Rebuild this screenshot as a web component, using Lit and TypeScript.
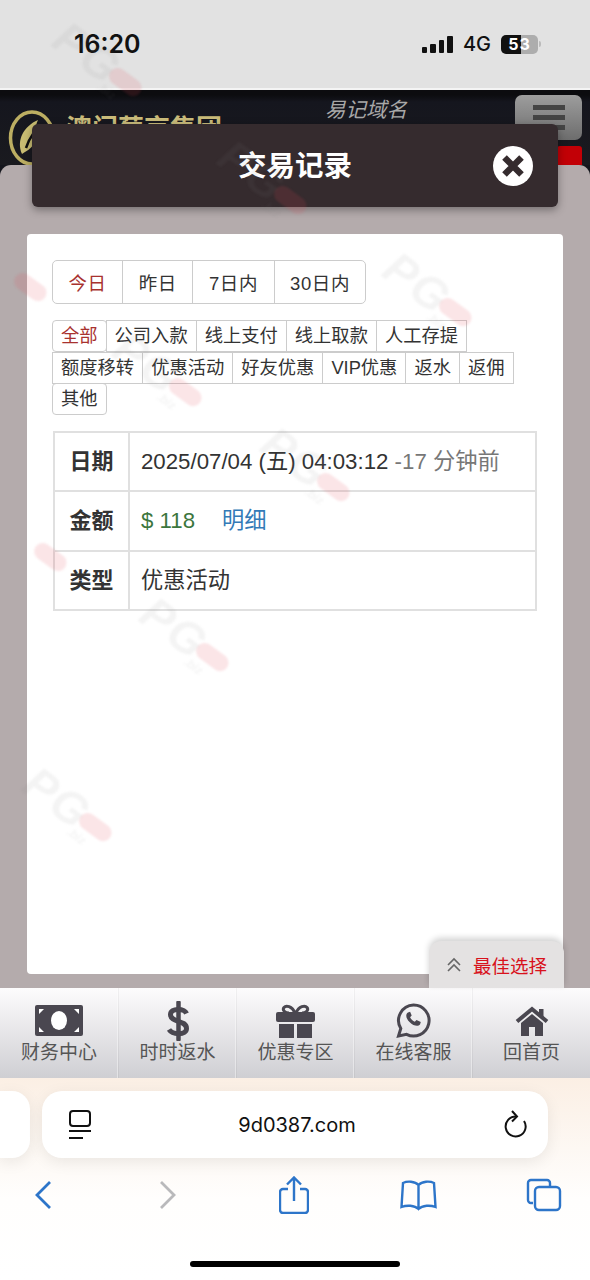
import { LitElement, html, css, svg } from "lit";
import { customElement } from "lit/decorators.js";

const ranges = ["今日", "昨日", "7日内", "30日内"];
const filters = ["全部", "公司入款", "线上支付", "线上取款", "人工存提", "额度移转", "优惠活动", "好友优惠", "VIP优惠", "返水", "返佣", "其他"];
const marks: [number, number, boolean][] = [[50, 20, true], [215, 138, true], [380, 250, true], [-45, 225, false], [110, 330, true], [258, 425, true], [-25, 495, false], [137, 595, true], [20, 765, true]];

const icons = {
  logo: svg`<svg width="48" height="56" viewBox="0 0 48 56" fill="none"><ellipse cx="24" cy="28" rx="21.500" ry="26" stroke="#bcae62" stroke-width="3.500"/><path d="M14 44C8 30 16 16 30 10c-4 8-1 12-3 20s-7 10-13 14z" fill="#c9bd72"/><path d="M18 38c2-6 4-10 7-14" stroke="#111" stroke-width="2.500"/></svg>`,
  money: svg`<svg width="48" height="31" viewBox="0 0 48 31"><rect width="48" height="31" rx="2" fill="#4a4750"/><ellipse cx="24" cy="15.500" rx="8" ry="9.500" fill="#fff"/><path d="M4 4h5l-5 5zM44 4h-5l5 5zM4 27h5l-5-5zM44 27h-5l5-5z" fill="#fff"/></svg>`,
  dollar: svg`<svg width="24" height="40" viewBox="0 0 24 40" fill="none" stroke="#4a4750"><path d="M20.500 12.500C18.500 7.500 4.500 6.500 4.500 13.500c0 8.500 16 5 16 14 0 7-14 6.500-17.500 1" stroke-width="5"/><path d="M12.500 1.500v37" stroke-width="4.500" stroke-linecap="round"/></svg>`,
  gift: svg`<svg width="39" height="34" viewBox="0 0 39 34" fill="none"><path d="M19 9C16 2 10 1 8 3.500S9 9 13 9M20 9c3-7 9-8 11-5.500S30 9 26 9" stroke="#4a4750" stroke-width="3"/><rect y="8" width="39" height="10" rx="2" fill="#4a4750"/><rect x="3" y="20" width="15" height="14" fill="#4a4750"/><rect x="21" y="20" width="15" height="14" fill="#4a4750"/></svg>`,
  chat: svg`<svg width="35" height="35" viewBox="0 0 35 35"><path d="M17.500 2a15.500 15.500 0 1 1-7 29.300L2.500 33l2.300-7.500A15.500 15.500 0 0 1 17.500 2z" fill="none" stroke="#4a4750" stroke-width="3"/><path d="M12 9.500c-2.500 1.500-2.500 5.500 1.500 9.500s8.500 5 10.500 2.500l.8-2.500-4.300-2-1.700 1.800c-2-.8-3.700-2.600-4.700-4.600l1.600-1.700-1.600-3.800z" fill="#4a4750"/></svg>`,
  home: svg`<svg width="34" height="30" viewBox="0 0 34 30" fill="none"><path d="M2 15.500 17 3l15 12.500" stroke="#4a4750" stroke-width="4"/><path d="M24 3h4.500v8L24 8z" fill="#4a4750"/><path d="M6 17 17 8l11 9v13h-8v-9h-6v9H6z" fill="#4a4750"/></svg>`,
  reader: svg`<svg width="24" height="30" viewBox="0 0 24 30" fill="none" stroke="#111" stroke-width="2"><rect x="2" y="1" width="20" height="15" rx="3"/><path d="M1 21h22M1 28h14"/></svg>`,
  reload: svg`<svg width="26" height="30" viewBox="0 0 26 30" fill="none" stroke="#111" stroke-width="2"><path d="M14 6.500A10 10 0 1 0 22 11"/><path d="M10 1l5 5.500-5 5"/></svg>`,
  back: svg`<svg width="18" height="30" viewBox="0 0 18 30" fill="none" stroke="#2d75c9" stroke-width="2.800"><path d="M16 2 3 15l13 13"/></svg>`,
  forward: svg`<svg width="18" height="30" viewBox="0 0 18 30" fill="none" stroke="#b9b9bb" stroke-width="2.800"><path d="M2 2l13 13L2 28"/></svg>`,
  share: svg`<svg width="30" height="38" viewBox="0 0 30 38" fill="none" stroke="#2d75c9" stroke-width="2.400"><path d="M9 13H4a3 3 0 0 0-3 3v18a3 3 0 0 0 3 3h22a3 3 0 0 0 3-3V16a3 3 0 0 0-3-3h-5"/><path d="M15 25V2M8 8.500 15 1.500l7 7"/></svg>`,
  book: svg`<svg width="37" height="31" viewBox="0 0 37 31" fill="none" stroke="#2d75c9" stroke-width="2.400"><path d="M18.500 5C15 1 7 1 3 3L1.500 27c5-2 13-2 17 2 4-4 12-4 17-2L34 3c-4-2-12-2-15.500 2zM18.500 5v24"/></svg>`,
  tabs: svg`<svg width="36" height="34" viewBox="0 0 36 34" fill="none" stroke="#2d75c9" stroke-width="2.400"><path d="M7 25H5a3 3 0 0 1-3-3V5a3 3 0 0 1 3-3h16a3 3 0 0 1 3 3v3"/><rect x="9" y="9" width="25" height="23" rx="4"/></svg>`,
  up: svg`<svg width="16" height="16" viewBox="0 0 16 16" fill="none" stroke="#666" stroke-width="1.600"><path d="M2 8l6-6 6 6M2 14l6-6 6 6"/></svg>`,
  close: svg`<svg width="24" height="24" viewBox="0 0 24 24" stroke="#352b2e" stroke-width="6.500"><path d="M3.500 3.500l17 17M20.500 3.500l-17 17"/></svg>`,
};

@customElement("app-root")
export class AppRoot extends LitElement {
  static styles = css`
    :host { display: block; position: relative; width: 590px; height: 1280px; overflow: hidden; background: #14151c; font-family: "Liberation Sans", "Noto Sans CJK SC", sans-serif; color: #333; }
    * { box-sizing: border-box; }

    .status { height: 88px; background: #e2e2e2; display: flex; align-items: center; padding: 0 49px 0 74px; color: #111; }
    .time { font: 600 25px "Inter", sans-serif; margin-right: auto; }
    .signal { display: flex; align-items: flex-end; gap: 3px; height: 17px; margin-right: 10px; }
    .signal i { display: block; width: 5.500px; background: #111; border-radius: 1px; }
    .net { font: 500 20px "Inter", sans-serif; margin-right: 10px; }
    .battery { width: 37px; height: 19px; border-radius: 5px; background: linear-gradient(90deg, #111 55%, #adadad 55%); color: #fff; font: 700 16px/19px "Inter", sans-serif; text-align: center; letter-spacing: 1px; }
    .tip { width: 2px; height: 6px; background: #bbb; margin-left: 1px; border-radius: 0 2px 2px 0; }

    .site { height: 77px; border-top: 2px solid #f4f4f4; background: linear-gradient(#0c0c0f 0 5px, #15161e 12px, #1a1a1f); display: flex; padding-left: 8px; overflow: hidden; }
    .logo { width: 48px; height: 56px; margin-top: 20px; flex: none; }
    .name { margin: 24px 0 0 10px; font-size: 26px; line-height: 30px; font-weight: 700; color: #c9bb7a; white-space: nowrap; flex: none; }
    .domain { margin: 7px 0 0 103px; font-size: 20.500px; line-height: 26px; font-style: italic; color: #a8a8a8; white-space: nowrap; flex: none; }
    .side { margin: 5px 8px 0 auto; display: flex; flex-direction: column; align-items: flex-end; gap: 6px; }
    .menu { width: 67px; height: 47px; border-radius: 7px; background: linear-gradient(#9d9d9d, #6d6d6d); display: flex; flex-direction: column; align-items: center; justify-content: center; gap: 5px; }
    .menu i { display: block; width: 32px; height: 5px; background: #444; }
    .red { width: 25px; height: 20px; background: #c20006; border-radius: 3px 3px 0 0; }

    .panel { height: 823px; background: #b4abac; border-radius: 11px 11px 0 0; padding: 69px 27px 14px; }
    .card { height: 740px; background: #fff; border-radius: 4px; padding: 26px 26px 0 25px; }
    .ranges { display: inline-flex; height: 44px; border: 1px solid #ccc; border-radius: 5px; }
    .ranges span { display: flex; align-items: center; padding: 0 15.500px; font-size: 18.500px; border-left: 1px solid #ccc; letter-spacing: .6px; }
    .ranges span:first-child { border-left: 0; }
    .on { color: #a8322f; }
    .chips { display: flex; flex-wrap: wrap; margin-top: 16px; }
    .chip { height: 32px; margin-bottom: -.350px; line-height: 30px; padding: 0 8px; border: 1px solid #ccc; margin-right: -1px; font-size: 18.300px; white-space: nowrap; }
    .chip.round { border-radius: 4px; }
    table { width: 484px; margin: 16px 0 0 1px; border-collapse: collapse; font-size: 22.250px; }
    th, td { border: 2px solid #e0e0e0; height: 59.300px; padding-bottom: 5px; }
    th { width: 75px; font-size: 22px; font-weight: 700; text-align: center; padding-top: 0; }
    td { padding-top: 0; padding-left: 11px; padding-right: 0; }
    .muted { color: #777; }
    .money { color: #3c763d; margin-right: 27px; }
    .link { color: #337ab7; }

    .modal { position: absolute; left: 32px; top: 124px; width: 526px; height: 83px; background: #352b2e; border-radius: 6px; box-shadow: 0 3px 8px rgba(0,0,0,.35); display: grid; grid-template-columns: 1fr auto 1fr; align-items: center; color: #fff; }
    .modal h2 { margin: -4px 0 0; font-size: 28.500px; font-weight: 700; }
    .x { justify-self: end; margin-right: 25px; width: 40px; height: 40px; border-radius: 50%; background: #fff; display: flex; align-items: center; justify-content: center; }

    .best { position: absolute; left: 429px; top: 941px; width: 135px; height: 47px; background: #e4e2e2; border-radius: 12px 12px 0 0; box-shadow: 0 -3px 6px rgba(0,0,0,.18); display: flex; align-items: center; padding-left: 17px; gap: 11px; color: #d8121c; font-size: 18.500px; white-space: nowrap; }

    .nav { height: 90px; display: grid; grid-template-columns: 119px 118px 118px 118px 117px; background: linear-gradient(#fdfcfd, #cfcfd3); }
    .item { display: flex; flex-direction: column; align-items: center; padding-top: 12px; border-right: 1px solid rgba(0,0,0,.045); box-shadow: inset -1px 0 0 rgba(255,255,255,.4); color: #555; font-size: 19px; line-height: 24px; }
    .item:last-child { border-right: 0; box-shadow: none; }
    .ic { height: 41px; display: flex; align-items: center; justify-content: center; }

    .safari { height: 202px; padding-top: 13px; display: flex; flex-direction: column; background: linear-gradient(#fbefe4, #fdf8f3 35%, #fffefd 60%, #fff); }
    .bar { display: flex; gap: 12px; height: 67px; }
    .stub { width: 30px; background: #fff; border-radius: 0 18px 18px 0; box-shadow: 0 4px 16px rgba(0,0,0,.08); }
    .url { width: 506px; background: #fff; border-radius: 20px; box-shadow: 0 4px 16px rgba(0,0,0,.08); display: flex; align-items: center; justify-content: space-between; padding: 0 20px 0 26px; font: 400 20px "Inter", sans-serif; color: #111; }
    .tools { display: flex; justify-content: space-between; padding: 0 26px 0 23px; margin-top: 18px; }
    .tools span { width: 40px; height: 38px; display: flex; align-items: center; justify-content: center; }
    .indicator { width: 210px; height: 6px; background: #000; border-radius: 3px; margin: auto auto 13px; }

    .marks { position: absolute; inset: 0; pointer-events: none; filter: blur(1px); }
    .mark { position: absolute; width: 95px; height: 40px; transform: rotate(36deg); color: rgba(130,130,130,.085); font: italic 700 46px/40px "Liberation Sans", sans-serif; letter-spacing: 2px; }
    .mark i { position: absolute; right: -6px; top: 13px; width: 36px; height: 17px; border-radius: 9px; background: rgba(225,70,85,.14); }
    .mark b { position: absolute; right: 12px; top: 34px; font-size: 12px; line-height: 12px; letter-spacing: 0; }
  `;

  render() {
    return html`
      <div class="status">
        <span class="time">16:20</span>
        <span class="signal"><i style="height:6px"></i><i style="height:9px"></i><i style="height:13px"></i><i style="height:17px"></i></span>
        <span class="net">4G</span>
        <span class="battery">53</span><span class="tip"></span>
      </div>
      <div class="site">
        <div class="logo">${icons.logo}</div>
        <div class="name">澳门葡京集团</div>
        <div class="domain">易记域名</div>
        <div class="side">
          <div class="menu"><i></i><i></i><i></i></div>
          <div class="red"></div>
        </div>
      </div>
      <div class="panel">
        <div class="card">
          <div class="ranges">${ranges.map((r, i) => html`<span class=${i === 0 ? "on" : ""}>${r}</span>`)}</div>
          <div class="chips">${filters.map((f, i) => html`<span class="chip ${i === 0 ? "on round" : ""} ${i === 11 ? "round" : ""}">${f}</span>`)}</div>
          <table>
            <tr><th>日期</th><td>2025/07/04 (五) 04:03:12 <span class="muted">-17 分钟前</span></td></tr>
            <tr><th>金额</th><td><span class="money">$ 118</span><span class="link">明细</span></td></tr>
            <tr><th>类型</th><td>优惠活动</td></tr>
          </table>
        </div>
      </div>
      <div class="nav">
        <div class="item"><span class="ic">${icons.money}</span>财务中心</div>
        <div class="item"><span class="ic">${icons.dollar}</span>时时返水</div>
        <div class="item"><span class="ic">${icons.gift}</span>优惠专区</div>
        <div class="item"><span class="ic">${icons.chat}</span>在线客服</div>
        <div class="item"><span class="ic">${icons.home}</span>回首页</div>
      </div>
      <div class="safari">
        <div class="bar">
          <div class="stub"></div>
          <div class="url">${icons.reader}<span>9d0387.com</span>${icons.reload}</div>
        </div>
        <div class="tools">
          <span>${icons.back}</span><span>${icons.forward}</span><span>${icons.share}</span><span>${icons.book}</span><span>${icons.tabs}</span>
        </div>
        <div class="indicator"></div>
      </div>
      <div class="modal">
        <span></span><h2>交易记录</h2>
        <div class="x">${icons.close}</div>
      </div>
      <div class="best">${icons.up}<span>最佳选择</span></div>
      <div class="marks">${marks.map(([x, y, full]) => html`<div class="mark" style="left:${x}px;top:${y + 20}px">${full ? html`PG<b>.biz</b>` : ""}<i></i></div>`)}</div>
    `;
  }
}
